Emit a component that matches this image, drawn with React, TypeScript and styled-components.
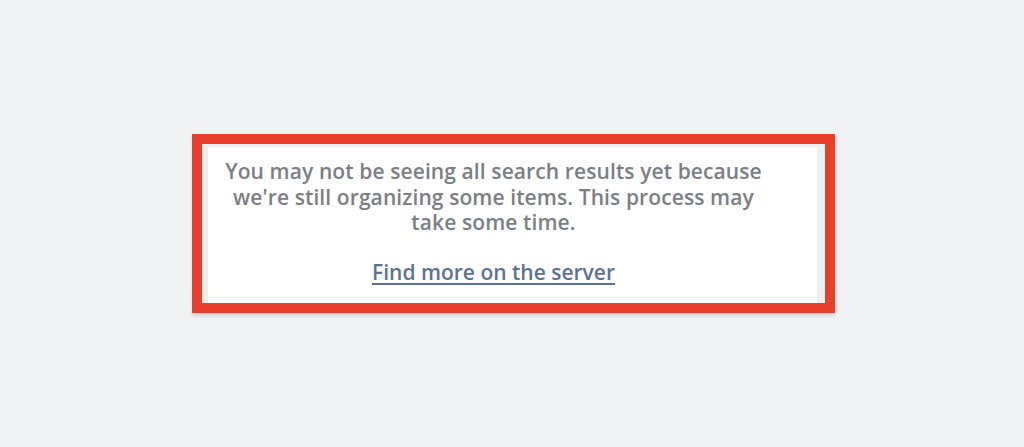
import styled, { createGlobalStyle } from 'styled-components';

const GlobalStyle = createGlobalStyle`
  html, body {
    margin: 0;
    padding: 0;
    background: #f1f2f4;
  }
  body {
    font-family: "Open Sans", "Liberation Sans", sans-serif;
  }
`;

const Page = styled.div`
  width: 1024px;
  height: 447px;
  display: flex;
  justify-content: center;
  align-items: flex-start;
  padding-top: 134px;
  box-sizing: border-box;
`;

const Frame = styled.div`
  width: 643px;
  height: 179px;
  box-sizing: border-box;
  border: 10px solid #e8402a;
  background: #ffffff;
  margin-left: 3px;
  box-shadow: 0 3px 3px rgba(0, 0, 0, 0.12);
  display: flex;
`;

const Panel = styled.div`
  flex: 1;
  border-left: 6px solid #eceef0;
  border-top: 3px solid #eceef0;
  border-right: 8px solid #eef0f2;
  background: #ffffff;
  display: flex;
  flex-direction: column;
  align-items: center;
  padding: 12px 38px 0 0;
`;

const Message = styled.p`
  margin: 0;
  text-align: center;
  font-size: 21px;
  font-weight: 600;
  line-height: 25.5px;
  letter-spacing: 0.1px;
  color: #7b7e84;
  white-space: nowrap;
`;

const ServerLink = styled.a`
  margin-top: 23px;
  font-size: 21px;
  font-weight: 600;
  line-height: 26px;
  color: #5d7290;
  text-decoration: underline;
  text-decoration-thickness: 2px;
  text-underline-offset: 3px;
  cursor: pointer;
`;

export default function App() {
  return (
    <>
      <GlobalStyle />
      <Page>
        <Frame>
          <Panel>
            <Message>
              You may not be seeing all search results yet because
              <br />
              we're still organizing some items. This process may
              <br />
              take some time.
            </Message>
            <ServerLink>Find more on the server</ServerLink>
          </Panel>
        </Frame>
      </Page>
    </>
  );
}
